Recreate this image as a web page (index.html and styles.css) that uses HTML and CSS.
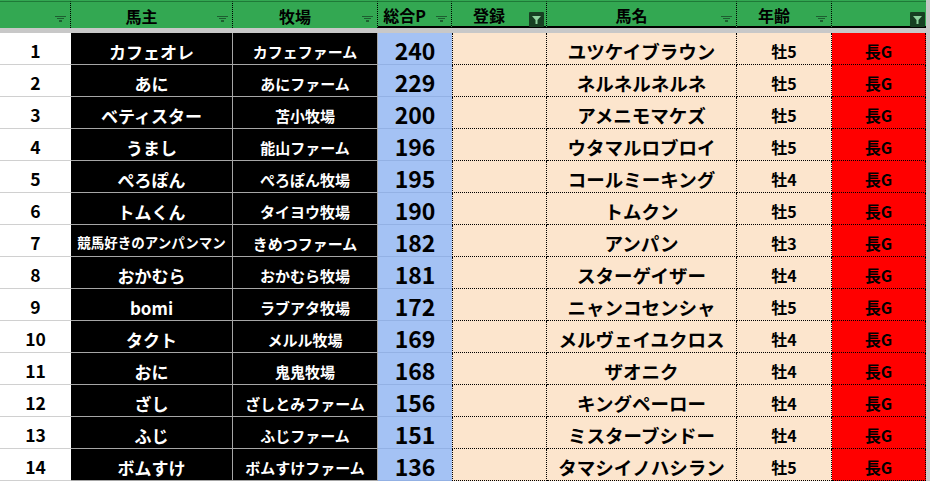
FILE: index.html
```html
<!DOCTYPE html>
<html lang="ja">
<head>
<meta charset="utf-8">
<title>馬主一覧</title>
<link rel="stylesheet" href="styles.css">
</head>
<body>
<div class="sheet">
  <div class="head">
    <div class="h h0"><span class="t"></span><span class="flt"><i></i><i></i><i></i></span></div>
    <div class="h h1"><span class="t">馬主</span><span class="flt"><i></i><i></i><i></i></span></div>
    <div class="h h2"><span class="t">牧場</span><span class="flt"><i></i><i></i><i></i></span></div>
    <div class="h h3 hb"><span class="t">総合P</span><span class="flt"><i></i><i></i><i></i></span></div>
    <div class="h h4 hb"><span class="t">登録</span><svg class="fbtn" width="15" height="15" viewBox="0 0 15 15"><rect width="15" height="15" rx="1" fill="#173f22"/><path d="M3 4h9l-3.5 4v4h-2v-4z" fill="#8fd39e"/></svg></div>
    <div class="h h5 hb"><span class="t">馬名</span><span class="flt"><i></i><i></i><i></i></span></div>
    <div class="h h6 hb"><span class="t">年齢</span><span class="flt"><i></i><i></i><i></i></span></div>
    <div class="h h7 hb"><span class="t"></span><svg class="fbtn" width="15" height="15" viewBox="0 0 15 15"><rect width="15" height="15" rx="1" fill="#173f22"/><path d="M3 4h9l-3.5 4v4h-2v-4z" fill="#8fd39e"/></svg></div>
    <div class="gut"></div>
  </div>
  <div class="band"></div>
  <div class="rows" id="rows">
    <div class="c c0">1</div><div class="c c1">カフェオレ</div><div class="c c2">カフェファーム</div><div class="c c3">240</div><div class="c c4"></div><div class="c c5">ユツケイブラウン</div><div class="c c6">牡5</div><div class="c c7">長G</div><div class="gut"></div>
    <div class="c c0">2</div><div class="c c1">あに</div><div class="c c2">あにファーム</div><div class="c c3">229</div><div class="c c4"></div><div class="c c5">ネルネルネルネ</div><div class="c c6">牡5</div><div class="c c7">長G</div><div class="gut"></div>
    <div class="c c0">3</div><div class="c c1">ベティスター</div><div class="c c2">苫小牧場</div><div class="c c3">200</div><div class="c c4"></div><div class="c c5">アメニモマケズ</div><div class="c c6">牡5</div><div class="c c7">長G</div><div class="gut"></div>
    <div class="c c0">4</div><div class="c c1">うまし</div><div class="c c2">能山ファーム</div><div class="c c3">196</div><div class="c c4"></div><div class="c c5">ウタマルロブロイ</div><div class="c c6">牡5</div><div class="c c7">長G</div><div class="gut"></div>
    <div class="c c0">5</div><div class="c c1">ぺろぽん</div><div class="c c2">ぺろぽん牧場</div><div class="c c3">195</div><div class="c c4"></div><div class="c c5">コールミーキング</div><div class="c c6">牡4</div><div class="c c7">長G</div><div class="gut"></div>
    <div class="c c0">6</div><div class="c c1">トムくん</div><div class="c c2">タイヨウ牧場</div><div class="c c3">190</div><div class="c c4"></div><div class="c c5">トムクン</div><div class="c c6">牡5</div><div class="c c7">長G</div><div class="gut"></div>
    <div class="c c0">7</div><div class="c c1 small">競馬好きのアンパンマン</div><div class="c c2">きめつファーム</div><div class="c c3">182</div><div class="c c4"></div><div class="c c5">アンパン</div><div class="c c6">牡3</div><div class="c c7">長G</div><div class="gut"></div>
    <div class="c c0">8</div><div class="c c1">おかむら</div><div class="c c2">おかむら牧場</div><div class="c c3">181</div><div class="c c4"></div><div class="c c5">スターゲイザー</div><div class="c c6">牡4</div><div class="c c7">長G</div><div class="gut"></div>
    <div class="c c0">9</div><div class="c c1">bomi</div><div class="c c2">ラブアタ牧場</div><div class="c c3">172</div><div class="c c4"></div><div class="c c5">ニャンコセンシャ</div><div class="c c6">牡5</div><div class="c c7">長G</div><div class="gut"></div>
    <div class="c c0">10</div><div class="c c1">タクト</div><div class="c c2">メルル牧場</div><div class="c c3">169</div><div class="c c4"></div><div class="c c5">メルヴェイユクロス</div><div class="c c6">牡4</div><div class="c c7">長G</div><div class="gut"></div>
    <div class="c c0">11</div><div class="c c1">おに</div><div class="c c2">鬼鬼牧場</div><div class="c c3">168</div><div class="c c4"></div><div class="c c5">ザオニク</div><div class="c c6">牡4</div><div class="c c7">長G</div><div class="gut"></div>
    <div class="c c0">12</div><div class="c c1">ざし</div><div class="c c2">ざしとみファーム</div><div class="c c3">156</div><div class="c c4"></div><div class="c c5">キングペーロー</div><div class="c c6">牡4</div><div class="c c7">長G</div><div class="gut"></div>
    <div class="c c0">13</div><div class="c c1">ふじ</div><div class="c c2">ふじファーム</div><div class="c c3">151</div><div class="c c4"></div><div class="c c5">ミスターブシドー</div><div class="c c6">牡4</div><div class="c c7">長G</div><div class="gut"></div>
    <div class="c c0">14</div><div class="c c1">ボムすけ</div><div class="c c2">ボムすけファーム</div><div class="c c3">136</div><div class="c c4"></div><div class="c c5">タマシイノハシラン</div><div class="c c6">牡5</div><div class="c c7">長G</div><div class="gut"></div>
  </div>
</div>
</body>
</html>
```
FILE: styles.css
```css
* { box-sizing: border-box; }
html, body { margin: 0; padding: 0; background: #fff; overflow: hidden; }
body {
  width: 930px;
  height: 481px;
  font-family: "Noto Sans CJK JP", "Noto Sans", sans-serif;
  font-weight: 700;
  color: #000;
}
.sheet { width: 930px; }

.head {
  display: grid;
  grid-template-columns: 71px 162px 145px 74px 95px 190px 95px 94px 4px;
  height: 28px;
  background: #33a852;
  padding-top: 1px;
}
.head .gut { background: #c8c8c8; margin-top: -1px; }
.h {
  position: relative;
  display: flex;
  align-items: center;
  border-top: 1px solid #1f7a38;
  border-right: 1px dotted #000;
  font-size: 16px;
  line-height: 1;
  padding-right: 20px;
}
.h7 { border-right: none; }
.h .t { flex: 1; text-align: center; padding-top: 1px; }
.hb { border-bottom: 2px solid #000; }
.flt {
  position: absolute;
  right: 4px;
  top: 14px;
  width: 11px;
  display: flex;
  flex-direction: column;
  align-items: center;
  gap: 1px;
}
.flt i { display: block; height: 1px; background: #1d5e30; }
.flt i:nth-child(1) { width: 11px; }
.flt i:nth-child(2) { width: 7px; }
.flt i:nth-child(3) { width: 3px; height: 2px; }
.fbtn { position: absolute; right: 2px; top: 10px; }
.h7 .fbtn { right: 1px; }

.band { height: 5px; background: #c8c8c8; }

.rows {
  display: grid;
  grid-template-columns: 71px 162px 145px 74px 95px 190px 95px 94px 4px;
  grid-auto-rows: 32px;
}
.c {
  display: flex;
  align-items: center;
  justify-content: center;
  padding-top: 5px;
  line-height: 1;
  white-space: nowrap;
}
.gut { background: #c8c8c8; }
.c0 { background: #fff; font-size: 17.5px; border-bottom: 1px solid #d0d0d0; }
.c1, .c2 {
  background: #000;
  color: #fff;
  border-bottom: 1px solid #a6a6a6;
  border-right: 1px solid #a6a6a6;
}
.c1 { font-size: 17px; }
.c1.small { font-size: 13.5px; }
.c2 { font-size: 15px; }
.c3 {
  background: #a4c2f4;
  font-size: 23px;
  padding-top: 3px;
  border-bottom: 1px solid #93b1e4;
}
.c4, .c5, .c6 {
  background: #fce5cd;
  border-bottom: 1px dotted #000;
  border-right: 1px dotted #000;
}
.c4 { border-left: 1px dotted #000; }
.c5 { font-size: 18.5px; }
.c6 { font-size: 16px; }
.c7 {
  background: #ff0000;
  font-size: 16px;
  border-bottom: 1px dotted #000;
  border-right: 1px dotted #000;
}
```
